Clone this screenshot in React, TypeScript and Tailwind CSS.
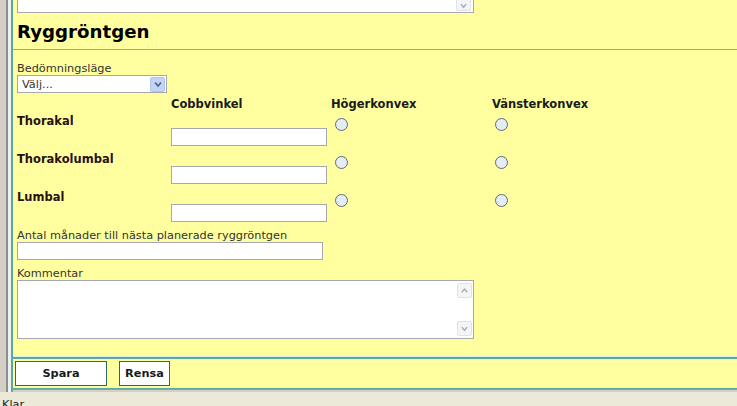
import React from 'react';

const Chevron: React.FC<{ up?: boolean; color?: string; size?: number }> = ({ up, color = '#a8adb5', size = 9 }) => (
  <svg width={size} height={size} viewBox="0 0 10 10">
    <path d={up ? 'M2 7 L5 3.5 L8 7' : 'M2 3.5 L5 7 L8 3.5'} fill="none" stroke={color} strokeWidth="1.6" />
  </svg>
);

const ScrollBtn: React.FC<{ up?: boolean }> = ({ up }) => (
  <div className="w-[15px] h-[15px] flex items-center justify-center rounded-[2px] border border-[#dfe3e8] bg-[#f4f5f7]">
    <Chevron up={up} />
  </div>
);

const Radio: React.FC = () => (
  <span className="block w-[13px] h-[13px] rounded-full border border-[#5d6a74] bg-[#e4ecf4]" />
);

const rows = ['Thorakal', 'Thorakolumbal', 'Lumbal'];

const App: React.FC = () => {
  return (
    <div className="w-[737px] h-[406px] overflow-hidden flex flex-col bg-[#ece9d8] font-['DejaVu_Sans',sans-serif] text-[11.3px] leading-[13px] text-[#222]">
      <div className="flex h-[392px] shrink-0">
        {/* window frame on the left */}
        <div className="w-[6px] bg-[#d4d0c8]" />
        <div className="w-[2px] bg-[#8e8e8e]" />
        <div className="w-[3px] bg-[#eef2ee]" />

        <div className="flex-1 flex flex-col bg-[#ffffa0] border-l-2 border-[#5aa89e]">
          {/* form */}
          <div className="flex-1 flex flex-col">
            <div className="pl-[4px]">
              {/* bottom of the previous textarea */}
              <div className="w-[457px] h-[13px] bg-white border border-t-0 border-[#a3a9ae] flex justify-end pr-[2px]">
                <div className="w-[15px] h-[11px] flex items-center justify-center border border-t-0 border-[#dfe3e8] bg-[#f4f5f7] rounded-b-[2px]">
                  <Chevron />
                </div>
              </div>

              <h2 className="mt-[7px] h-[24px] text-[18.2px] leading-[24px] font-bold text-black">Ryggröntgen</h2>
            </div>

            <div className="mt-[5px] h-[1px] bg-[#a4a49a]" />

            <div className="pl-[4px]">
              <div className="mt-[12px] text-[#333]">Bedömningsläge</div>
              <div className="w-[150px] h-[18px] bg-white border border-[#a3a9ae] flex items-center justify-between">
                <span className="pl-[4px] text-[#333]">Välj...</span>
                <span className="w-[15px] h-[15px] mr-[1px] flex items-center justify-center bg-[#c4d4f7] border border-[#b2c4ec] rounded-[2px]">
                  <Chevron color="#4d6185" size={10} />
                </span>
              </div>

              {/* grid of measurements */}
              <div className="grid grid-cols-[154px_160px_161px_1fr] mt-[5px] font-bold text-[11.5px]">
                <div className="h-[16px]" />
                <div className="h-[16px] text-[#1a1a1a]">Cobbvinkel</div>
                <div className="h-[16px] text-[#1a1a1a]">Högerkonvex</div>
                <div className="h-[16px] text-[#1a1a1a]">Vänsterkonvex</div>

                {rows.map((r) => (
                  <React.Fragment key={r}>
                    <div className="h-[38px] pt-[1px] text-[#2a1010]">{r}</div>
                    <div className="h-[38px] pt-[14px]">
                      <div className="w-[156px] h-[18px] bg-white border border-[#a3a9ae]" />
                    </div>
                    <div className="h-[38px] pt-[4px] pl-[4px]">
                      <Radio />
                    </div>
                    <div className="h-[38px] pt-[4px] pl-[3px]">
                      <Radio />
                    </div>
                  </React.Fragment>
                ))}
              </div>

              <div className="mt-[1px] text-[#333]">Antal månader till nästa planerade ryggröntgen</div>
              <div className="w-[306px] h-[18px] bg-white border border-[#a3a9ae]" />

              <div className="mt-[7px] text-[#333]">Kommentar</div>
              <div className="w-[457px] h-[59px] bg-white border border-[#a3a9ae] flex justify-end pr-[1px] py-[2px]">
                <div className="flex flex-col justify-between">
                  <ScrollBtn up />
                  <ScrollBtn />
                </div>
              </div>
            </div>
          </div>

          {/* buttons */}
          <div className="h-[1px] bg-[#d8f0e4]" />
          <div className="h-[32px] border-t-2 border-b border-[#5aa89e] pl-[2px] pt-[2px] flex items-start">
            <button className="w-[92px] h-[25px] bg-white border border-[#2d6a5a] font-bold text-[#1a1a1a]">Spara</button>
            <button className="ml-[12px] w-[51px] h-[25px] bg-white border border-[#2d6a5a] font-bold text-[#1a1a1a]">Rensa</button>
          </div>
          <div className="h-[1px] bg-[#9c9c9c]" />
          <div className="h-[2px] bg-[#d4d0c8]" />
        </div>
      </div>

      {/* status bar */}
      <div className="flex-1 min-h-0 overflow-hidden pl-[2px] pt-[6px] text-[#222]">Klar</div>
    </div>
  );
};

export default App;
